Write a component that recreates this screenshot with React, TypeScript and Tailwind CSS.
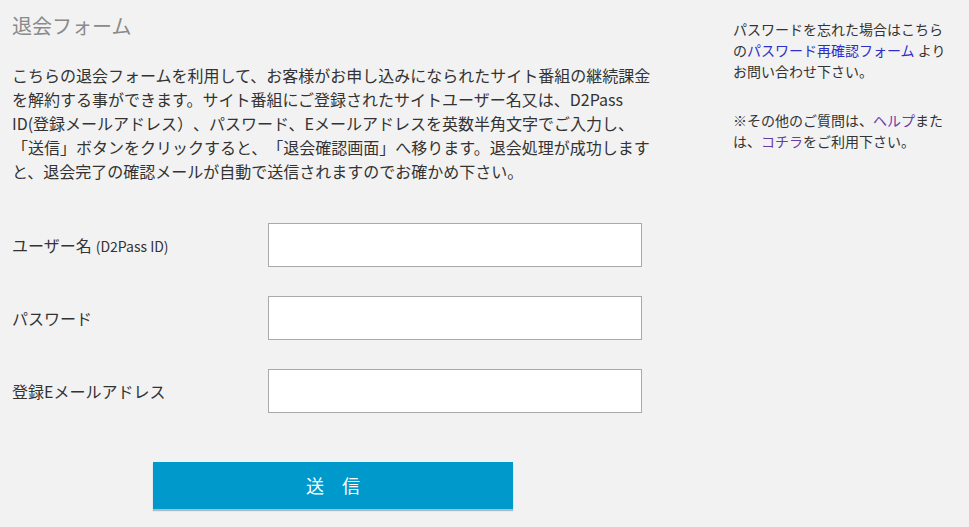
import React from "react"

const fields = [
  { id: "username", label: "ユーザー名", sub: "(D2Pass ID)", type: "text" },
  { id: "password", label: "パスワード", sub: "", type: "password" },
  { id: "email", label: "登録Eメールアドレス", sub: "", type: "email" },
]

export default function App() {
  return (
    <div
      className="min-h-[527px] w-full bg-[#f2f2f2] text-[#333333] [text-spacing-trim:space-all]"
      style={{ fontFamily: '"Noto Sans CJK JP", "Noto Sans", sans-serif' }}
    >
      <div className="flex">
        {/* Main column */}
        <div className="w-[660px] shrink-0 pl-[12px]">
          <h1 className="pt-[12px] text-[20px] leading-[28px] font-normal text-[#8a8a8a]">退会フォーム</h1>

          <p className="mt-[23px] w-[648px] text-[16px] leading-[24px]">
            こちらの退会フォームを利用して、お客様がお申し込みになられたサイト番組の継続課金を解約する事ができます。サイト番組にご登録されたサイトユーザー名又は、D2Pass ID(登録メールアドレス）、パスワード、Eメールアドレスを英数半角文字でご入力し、「送信」ボタンをクリックすると、「退会確認画面」へ移ります。退会処理が成功しますと、退会完了の確認メールが自動で送信されますのでお確かめ下さい。
          </p>

          {/* Form */}
          <form className="mt-[40px] flex flex-col gap-[29px]" onSubmit={(e) => e.preventDefault()}>
            {fields.map((f) => (
              <div key={f.id} className="flex items-center">
                <label htmlFor={f.id} className="w-[256px] shrink-0 text-[16px] leading-[24px]">
                  {f.label}
                  {f.sub && <span className="ml-[4px] text-[14px]">{f.sub}</span>}
                </label>
                <input
                  id={f.id}
                  type={f.type}
                  className="h-[44px] w-[374px] border border-[#a9a9a9] bg-white px-2 text-[16px] outline-none"
                />
              </div>
            ))}

            <button
              type="submit"
              className="ml-[141px] mt-[20px] h-[47px] w-[360px] bg-[#0099cc] text-[18px] text-white shadow-[0_2px_1px_rgba(80,120,140,0.45)]"
            >
              送　信
            </button>
          </form>
        </div>

        {/* Sidebar */}
        <div className="ml-[73px] w-[216px] shrink-0 pt-[19px] text-[14px] leading-[21px]">
          <p>
            パスワードを忘れた場合はこちらの<a href="#" className="text-[#2f2fc8]">パスワード再確認フォーム</a> よりお問い合わせ下さい。
          </p>
          <p className="mt-[28px]">
            ※その他のご質問は、<a href="#" className="text-[#6a3aa8]">ヘルプ</a>または、<a href="#" className="text-[#6a3aa8]">コチラ</a>をご利用下さい。
          </p>
        </div>
      </div>
    </div>
  )
}
